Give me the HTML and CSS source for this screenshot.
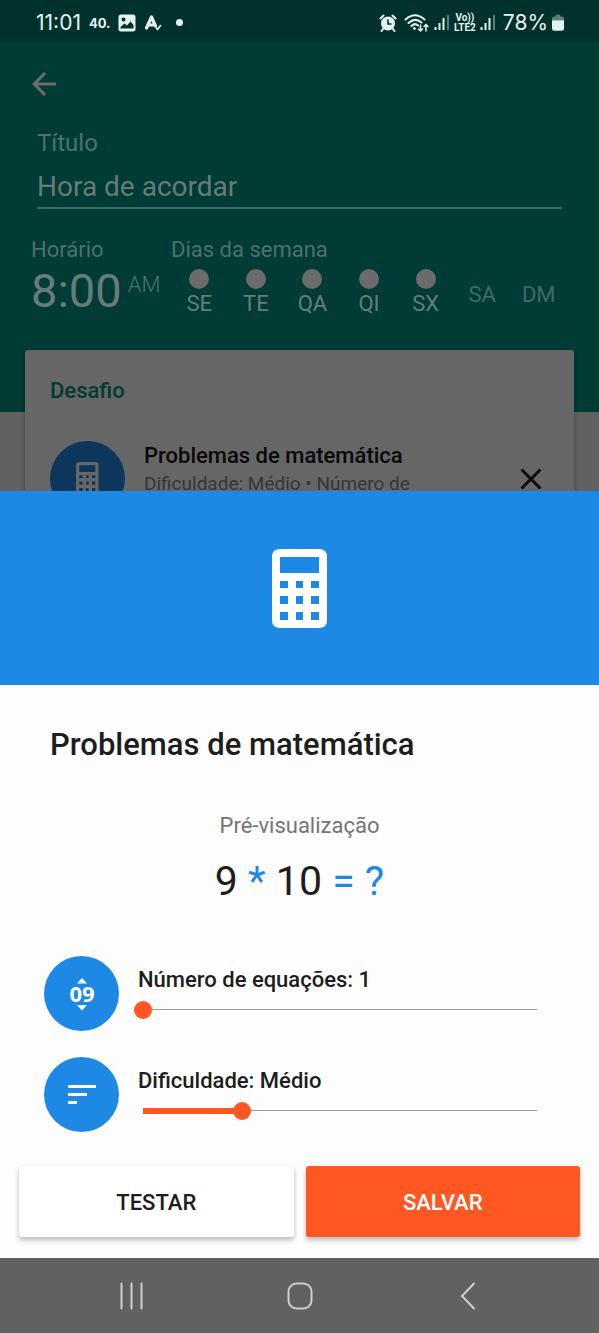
FILE: index.html
```html
<!DOCTYPE html>
<html lang="pt-BR">
<head>
<meta charset="utf-8">
<meta name="viewport" content="width=device-width, initial-scale=1">
<title>Problemas de matemática</title>
<link rel="stylesheet" href="styles.css">
</head>
<body>
<svg class="symbols" aria-hidden="true">
  <symbol id="calculator" viewBox="0 0 56 80">
    <path fill="currentColor" fill-rule="evenodd" d="M8 0H47Q55 0 55 8V71Q55 79 47 79H8Q0 79 0 71V8Q0 0 8 0ZM8 8V24H47V8ZM8 32V39H16V32ZM24 32V39H31V32ZM39 32V39H47V32ZM8 47V55H16V47ZM24 47V55H31V47ZM39 47V55H47V47ZM8 63V71H16V63ZM24 63V71H31V63ZM39 63V71H47V63Z"/>
  </symbol>
</svg>
<div class="screen">
  <div class="backdrop">
    <div class="status-bar">
      <div class="status-group">
        <span class="clock">11:01</span>
        <span class="temperature">40.</span>
        <svg width="18" height="18" viewBox="0 0 18 18"><path fill="currentColor" fill-rule="evenodd" d="M3 0.500H15Q17.500 0.500 17.500 3V15Q17.500 17.500 15 17.500H3Q0.500 17.500 0.500 15V3Q0.500 0.500 3 0.500ZM5.500 3.500A2 2 0 1 0 5.500 7.500A2 2 0 1 0 5.500 3.500ZM2.500 14.500H15.500V11L12.500 7.500L9 11.500L6.500 9.500L2.500 13Z"/></svg>
        <svg class="letter-icon" width="18" height="18" viewBox="0 0 18 18" fill="none" stroke="currentColor" stroke-linecap="round" stroke-linejoin="round"><path stroke-width="3.200" d="M2.500 14L7.500 3L11.500 12M4 11H10.500"/><path stroke-width="1.600" d="M12.500 14L13.500 15.500L16.500 11.500"/></svg>
        <span class="more-dot"></span>
      </div>
      <div class="status-group status-right">
        <svg width="18" height="18" viewBox="0 0 18 18"><circle cx="9" cy="9.500" r="7" fill="currentColor"/><path d="M1.500 4.500L4.500 1.500M16.500 4.500L13.500 1.500M4 15L2.500 17M14 15L15.500 17" stroke="currentColor" stroke-width="2" stroke-linecap="round"/><path d="M9 5.500V10H12.500" fill="none" stroke="#00312d" stroke-width="1.600"/></svg>
        <svg class="wifi" width="26" height="20" viewBox="0 0 26 20" fill="none" stroke="currentColor" stroke-width="2" stroke-linecap="round"><path d="M1.500 6.500Q11 -2 20.500 6.500M4.500 10Q11 4 17.500 9.500M7.500 13Q11 9.500 14 12.500"/><circle cx="10.500" cy="15.500" r="1" fill="currentColor" stroke-width="1"/><path stroke-width="1.500" d="M16.500 12V18M14.500 16L16.500 18L18.500 16M22 18V11.500M20 13.500L22 11.500L24 13.500"/></svg>
        <svg width="16" height="17" viewBox="0 0 16 17" stroke="currentColor" stroke-width="2"><path d="M1.500 13V16M5.500 9V16M9.500 4V16"/><path opacity=".4" d="M14 1V16"/></svg>
        <span class="network"><span>Vo))</span><span>LTE2</span></span>
        <svg width="16" height="17" viewBox="0 0 16 17" stroke="currentColor" stroke-width="2"><path d="M1.500 13V16M5.500 9V16M9.500 4V16"/><path opacity=".4" d="M14 1V16"/></svg>
        <span class="charge">78%</span>
        <svg width="12" height="18" viewBox="0 0 13 18" fill="currentColor"><path opacity=".4" d="M4 0H9V2H11Q13 2 13 4V6H0V4Q0 2 2 2H4Z"/><path d="M0 6H13V15Q13 17.500 10.500 17.500H2.500Q0 17.500 0 15Z"/></svg>
      </div>
    </div>
    <header class="alarm-header">
      <button class="icon-button" type="button" aria-label="Voltar">
        <svg width="36" height="36" viewBox="0 0 24 24" fill="currentColor"><path d="M20 11H7.830l5.590-5.590L12 4l-8 8 8 8 1.410-1.410L7.830 13H20v-2z"/></svg>
      </button>
      <div class="title-field">
        <label for="alarm-title">Título</label>
        <input id="alarm-title" type="text" value="Hora de acordar">
      </div>
      <div class="schedule">
        <div class="time">
          <div class="caption">Horário</div>
          <div class="time-value"><span class="hour">8:00</span><span class="period">AM</span></div>
        </div>
        <div class="week">
          <div class="caption">Dias da semana</div>
          <div class="days">
            <button class="day on" type="button">SE</button>
            <button class="day on" type="button">TE</button>
            <button class="day on" type="button">QA</button>
            <button class="day on" type="button">QI</button>
            <button class="day on" type="button">SX</button>
            <button class="day" type="button">SA</button>
            <button class="day" type="button">DM</button>
          </div>
        </div>
      </div>
    </header>
    <section class="card">
      <h2 class="card-heading">Desafio</h2>
      <div class="challenge">
        <span class="badge"><svg width="23" height="33"><use href="#calculator"/></svg></span>
        <div class="challenge-text">
          <div class="challenge-name">Problemas de matemática</div>
          <div class="challenge-detail">Dificuldade: Médio • Número de</div>
        </div>
        <button class="icon-button close" type="button" aria-label="Remover">
          <svg width="36" height="36" viewBox="0 0 24 24" fill="currentColor"><path d="M19 6.410L17.590 5 12 10.590 6.410 5 5 6.410 10.590 12 5 17.590 6.410 19 12 13.410 17.590 19 19 17.590 13.410 12z"/></svg>
        </button>
      </div>
    </section>
  </div>

  <main class="sheet">
    <div class="hero"><svg width="56" height="80"><use href="#calculator"/></svg></div>
    <h1 class="sheet-title">Problemas de matemática</h1>
    <div class="preview-label">Pré-visualização</div>
    <div class="equation">9 <span>*</span> 10 <span>= ?</span></div>
    <div class="settings">
      <div class="setting">
        <span class="badge"><svg width="28" height="36" viewBox="0 0 28 36" fill="currentColor"><path d="M9 7.500L14 2L19 7.500ZM9 29L14 34.500L19 29Z"/><text x="14" y="26" text-anchor="middle" class="digits">09</text></svg></span>
        <div class="control">
          <label for="count">Número de equações: 1</label>
          <input class="slider" id="count" type="range" min="1" max="5" value="1" style="--fill: 0">
        </div>
      </div>
      <div class="setting">
        <span class="badge"><svg width="28" height="20" viewBox="0 0 28 20" fill="currentColor"><path d="M0 0H28V3H0ZM0 8H19V11H0ZM0 16H9V19H0Z"/></svg></span>
        <div class="control">
          <label for="level">Dificuldade: Médio</label>
          <input class="slider" id="level" type="range" min="0" max="4" value="1" style="--fill: 0.25">
        </div>
      </div>
    </div>
    <div class="actions">
      <button class="action" type="button">TESTAR</button>
      <button class="action primary" type="button">SALVAR</button>
    </div>
  </main>

  <nav class="system-nav">
    <button type="button" aria-label="Recentes"><svg width="28" height="28" viewBox="0 0 28 28"><path d="M3.500 1.500V26.500M13.500 1.500V26.500M23.500 1.500V26.500"/></svg></button>
    <button type="button" aria-label="Início"><svg width="28" height="28" viewBox="0 0 28 28"><rect x="2.500" y="1.500" width="23" height="25" rx="8"/></svg></button>
    <button type="button" aria-label="Voltar"><svg width="28" height="28" viewBox="0 0 28 28"><path d="M20 1.500L8 14L20 26.500"/></svg></button>
  </nav>
</div>
</body>
</html>
```

FILE: styles.css
```css
* {
  box-sizing: border-box;
}

body {
  margin: 0;
  font-family: Roboto, sans-serif;
  font-size: 22px;
  line-height: 26px;
  color: #1d1d1d;
}

button,
input {
  margin: 0;
  padding: 0;
  border: 0;
  background: none;
  color: inherit;
  font: inherit;
}

svg {
  display: block;
  flex: none;
}

.symbols {
  display: none;
}

.screen {
  display: flex;
  flex-direction: column;
  min-height: 100vh;
}

/* Dimmed alarm page behind the sheet */
.backdrop {
  flex: 1 1 0;
  min-height: 240px;
  overflow: hidden;
  background: #616161;
}

.status-bar {
  display: flex;
  justify-content: space-between;
  align-items: center;
  height: 41px;
  padding: 4px 35px 0 36px;
  background: #00312d;
  color: #e4f3f0;
  font-family: Inter, sans-serif;
  font-size: 21px;
}

.status-group {
  display: flex;
  align-items: center;
  gap: 8px;
}

.temperature {
  font-size: 13px;
  font-weight: 700;
}

.more-dot {
  width: 7px;
  height: 7px;
  margin-left: 6px;
  border-radius: 50%;
  background: currentColor;
}

.status-right {
  gap: 4px;
}

.wifi {
  margin-left: 3px;
}

.network {
  display: flex;
  flex-direction: column;
  align-items: center;
  font-family: Roboto, sans-serif;
  font-size: 10px;
  font-weight: 700;
  line-height: 10px;
}

.charge {
  margin-left: 3px;
}

.alarm-header {
  padding: 25px 32px 95px 26px;
  background: #003b35;
  color: #667c79;
}

.icon-button {
  display: block;
  color: #6b6b6b;
}

.title-field {
  display: flex;
  flex-direction: column;
  gap: 12px;
  margin: 27px 5px 0 11px;
}

.title-field label {
  color: #4d716c;
  font-size: 24px;
  line-height: 28px;
}

.title-field input {
  width: 100%;
  height: 40px;
  padding-bottom: 4px;
  border-bottom: 2px solid #406a65;
  border-radius: 0;
  font-size: 28px;
}

.schedule {
  display: flex;
  margin-top: 28px;
  padding-left: 5px;
}

.time {
  flex: none;
  width: 140px;
}

.caption {
  color: #4d716c;
}

.time-value {
  display: flex;
  gap: 6px;
  margin-top: 3px;
}

.hour {
  font-size: 47px;
  line-height: 50px;
}

.period {
  padding-top: 6px;
  color: #4d716c;
  font-weight: 300;
}

.week {
  flex: 1;
}

.days {
  display: grid;
  grid-template-columns: repeat(7, 1fr);
  align-items: center;
  margin-top: 6px;
}

.day {
  display: flex;
  flex-direction: column;
  align-items: center;
  gap: 2px;
  padding-top: 4px;
  color: #406a65;
}

.day.on {
  padding-top: 0;
  color: #667c79;
}

.day.on::before {
  content: "";
  width: 20px;
  height: 20px;
  border-radius: 50%;
  background: #6b6b6b;
}

.card {
  margin: -62px 25px 0;
  padding: 28px 25px 40px;
  border-radius: 3px;
  background: #666666;
  box-shadow: 0 2px 5px rgba(0, 0, 0, 0.3);
}

.card-heading {
  margin: 0;
  color: #003b35;
  font-size: 22px;
  font-weight: 500;
}

.challenge {
  display: flex;
  margin-top: 37px;
}

.badge {
  display: flex;
  flex: none;
  justify-content: center;
  align-items: center;
  width: 75px;
  height: 75px;
  border-radius: 50%;
  background: #1e88e5;
  color: #fff;
}

.card .badge {
  background: #0c365c;
  color: #666666;
}

.challenge-text {
  flex: 1;
  padding: 2px 0 0 19px;
}

.challenge-name {
  color: #080808;
  font-weight: 500;
}

.challenge-detail {
  margin-top: 2px;
  color: #363636;
  font-size: 19px;
}

.close {
  align-self: center;
  color: #0b0b0b;
}

/* Challenge settings sheet */
.sheet {
  background: #fdfdfd;
}

.hero {
  display: flex;
  justify-content: center;
  align-items: center;
  height: 194px;
  padding-top: 2px;
  background: #1e88e5;
  color: #fff;
}

.sheet-title {
  margin: 40px 50px 0;
  font-size: 31px;
  font-weight: 500;
  line-height: 40px;
}

.preview-label {
  margin-top: 48px;
  color: #757575;
  text-align: center;
}

.equation {
  margin-top: 18px;
  font-size: 41px;
  line-height: 48px;
  text-align: center;
}

.equation span {
  color: #1e88e5;
}

.settings {
  display: grid;
  gap: 26px;
  margin-top: 51px;
  padding: 0 53px 0 44px;
}

.setting {
  display: flex;
  align-items: center;
  gap: 15px;
}

.digits {
  font-family: "Noto Sans", sans-serif;
  font-size: 22px;
  font-weight: 700;
}

.control {
  display: flex;
  flex: 1;
  flex-direction: column;
  gap: 8px;
  padding-bottom: 2px;
}

.control label {
  padding-left: 4px;
  font-weight: 500;
}

.slider {
  width: 100%;
  height: 18px;
  appearance: none;
  background:
    linear-gradient(#ff5722, #ff5722) 9px center / calc((100% - 18px) * var(--fill)) 6px no-repeat,
    linear-gradient(#9c9c9c, #9c9c9c) center / calc(100% - 18px) 1px no-repeat;
}

.slider::-webkit-slider-thumb {
  width: 18px;
  height: 18px;
  appearance: none;
  border-radius: 50%;
  background: #ff5722;
}

.actions {
  display: grid;
  grid-template-columns: 1fr 1fr;
  gap: 12px;
  margin-top: 34px;
  padding: 0 19px 21px;
}

.action {
  height: 71px;
  padding-top: 2px;
  border-radius: 3px;
  background: #fff;
  box-shadow: 0 3px 5px rgba(0, 0, 0, 0.28);
  font-weight: 500;
}

.action.primary {
  background: #ff5722;
  color: #fff;
}

.system-nav {
  display: flex;
  justify-content: center;
  align-items: center;
  gap: 140px;
  height: 75px;
  background: #616161;
}

.system-nav svg {
  fill: none;
  stroke: #d0d0d0;
  stroke-width: 2;
  stroke-linecap: round;
}
```
